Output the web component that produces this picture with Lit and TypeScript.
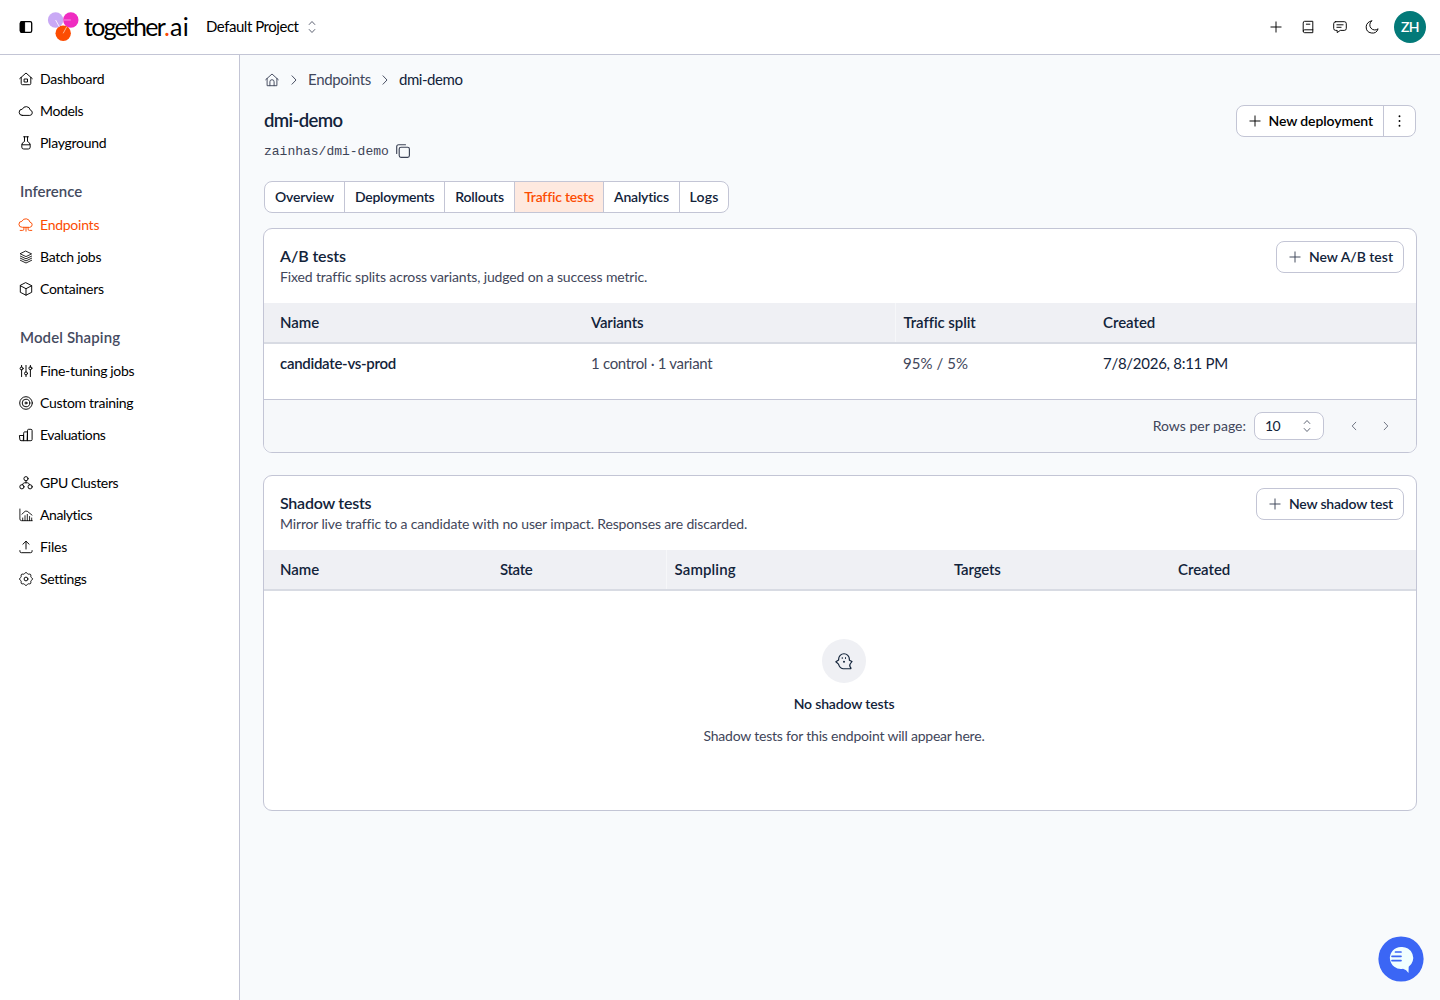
import { LitElement, html, css, svg, nothing, SVGTemplateResult } from "lit";
import { customElement, property } from "lit/decorators.js";

/* Eight-lobed outline of the settings gear. */
const gear =
  "M" +
  Array.from({ length: 64 }, (_, i) => {
    const a = (i / 64) * Math.PI * 2;
    const r = 5.85 + 0.6 * Math.cos(8 * a);
    return `${(8 + r * Math.cos(a)).toFixed(2)} ${(8 + r * Math.sin(a)).toFixed(2)}`;
  }).join("L") +
  "z";

/* Line icons, drawn on a 16 x 16 grid. */
const icons: Record<string, SVGTemplateResult> = {
  panel: svg`<rect x="2.3" y="2.6" width="11.4" height="10.8" rx="1.6" stroke-width="1.3"/><path d="M2.3 4.2Q2.3 2.6 3.9 2.6H6.6V13.4H3.9Q2.3 13.4 2.3 11.8Z" fill="currentColor"/>`,
  dashboard: svg`<path d="M1.7 7.6 8 2l6.3 5.6M3.2 6.4v6q0 1.3 1.3 1.3h7q1.3 0 1.3-1.3v-6M6.5 8h3v3h-3z"/>`,
  models: svg`<path d="M4.2 12.4h7.6a2.7 2.7 0 0 0 .5-5.3 4.2 4.2 0 0 0-8-.9 3.1 3.1 0 0 0-.1 6.2z"/>`,
  playground: svg`<path d="M5.6 1.8h4.8M6.5 1.8v4.7a4 4 0 0 0-2.7 4v1.6q0 1.9 1.9 1.9h4.6q1.9 0 1.9-1.9v-1.6a4 4 0 0 0-2.7-4V1.8M3.8 9.8h8.4"/>`,
  endpoints: svg`<path d="M4 10.300a3 3 0 0 1-.1-6A4.300 4.300 0 0 1 12 5.200a2.600 2.600 0 0 1 .1 5.100zM5.900 10.300v1.900q0 1.200-1.200 1.200H2.200M10.100 10.300v1.900q0 1.200 1.200 1.200h2.500M8 10.300v3.900"/>`,
  batch: svg`<path d="m8 2.2 5.6 2.7L8 7.6 2.4 4.9zM2.4 7.100 8 9.800l5.600-2.700M2.400 9.200 8 11.900l5.600-2.700M2.400 11.300 8 14l5.600-2.700" stroke-width=".85"/>`,
  containers: svg`<path d="m8 1.8 5.7 2.9v6.6L8 14.2l-5.7-2.9V4.7zM2.3 4.7 8 7.7l5.7-3M8 7.7v6.5"/>`,
  tuning: svg`<path d="M3.6 2.4v1.7M3.6 6.6v7M8 2.4v6.5M8 11.9v1.7M12.4 2.4v2M12.4 6.6v7"/><circle cx="3.6" cy="5.5" r="1.5"/><circle cx="8" cy="10.4" r="1.5"/><circle cx="12.4" cy="5.2" r="1.5"/>`,
  training: svg`<circle cx="8" cy="8" r="6.3"/><circle cx="8" cy="8" r="3.8"/><circle cx="8" cy="8" r="1"/>`,
  evaluations: svg`<path d="M1.8 8.5h3.9v5.2H3q-1.2 0-1.2-1.2zM5.7 5.8q0-.9.9-.9h2.9v8.8H5.7zM9.5 3.3q0-1 1-1h2.4q1.2 0 1.2 1.2v9q0 1.2-1.2 1.2H9.500z"/>`,
  gpu: svg`<circle cx="8" cy="3.7" r="2.100"/><circle cx="3.900" cy="11.800" r="2.100"/><circle cx="12.100" cy="11.800" r="2.100"/><path d="M8 5.800v2M4.500 9.800 5 8.800Q5.400 7.800 6.500 7.800h3q1.100 0 1.500 1l.5 1"/>`,
  analytics: svg`<path d="M1.900 2v10q0 1.700 1.700 1.700h10.600M3.900 7.200l3.300-3 2 0 4.800 3.900M4.700 11v2.600M7 8.700v4.900M9.300 7.400v6.200M11.600 9.500v4.100M13.700 11v2.600" stroke-width=".85"/>`,
  files: svg`<path d="M8 10V2.400M4.900 5.200 8 2.200l3.100 3M1.900 11.600v.6q0 1.500 1.500 1.500h9.200q1.500 0 1.500-1.500v-.6"/>`,
  settings: svg`<path d=${gear}/><circle cx="8" cy="8" r="1.900"/>`,
  plus: svg`<path d="M8 2.900v10.200M2.900 8h10.200"/>`,
  book: svg`<path d="M3.200 3.700q0-1.400 1.400-1.400h8.200v11.400H4.600q-1.400 0-1.400-1.400zM3.200 12q0-1.200 1.400-1.200h8.200M6.300 5.200h3.600"/>`,
  chat: svg`<path d="M3.700 2.700h8.600q2 0 2 2v4.700q0 2-2 2H8.300l-3.100 2.200v-2.200H3.700q-2 0-2-2V4.700q0-2 2-2zM4.900 5.800h6.200M4.900 8.300h4.200"/>`,
  moon: svg`<path d="M7.600 1.900a6.100 6.100 0 1 0 6.500 7.900A5 5 0 0 1 7.600 1.900z"/>`,
  sort: svg`<path d="m5.200 5.500 2.800-3 2.800 3M5.200 10.500l2.800 3 2.800-3"/>`,
  home: svg`<path d="M1.700 7.700 8 2l6.300 5.700M3.100 6.500v7.200h9.800V6.500M5.900 13.700V9.800q0-2.100 2.100-2.100t2.100 2.100v3.900"/>`,
  right: svg`<path d="M6 3.800 10 8l-4 4.200"/>`,
  left: svg`<path d="M10 3.800 6 8l4 4.200"/>`,
  dots: svg`<g fill="currentColor" stroke="none"><circle cx="7.500" cy="3.300" r=".95"/><circle cx="7.500" cy="8" r=".95"/><circle cx="7.500" cy="12.700" r=".95"/></g>`,
  copy: svg`<rect x="4.200" y="4.200" width="10.200" height="10.200" rx="1.800" stroke-width="1.150"/><path d="M1.700 10.500V3.700q0-2 2-2h6.800" stroke-width="1.150"/>`,
  ghost: svg`<path d="M3.700 6.500a4.300 4.300 0 0 1 8.600 0v.9l2.100 1-1.500 2q-.9 1.500.7 3.400-.2.500-.9.400H7.200Q4.600 13.900 3.600 10.500L1.500 8.600l2.200-1.400z"/><path d="M6.600 5.300v.7M9.200 5.300v.7" stroke-width=".8"/><circle cx="8" cy="8.600" r=".8" fill="currentColor" stroke="none"/>`,
};

const icon = (name: string, size = 16) =>
  html`<svg width=${size} height=${size} viewBox="0 0 16 16" fill="none" stroke="currentColor" stroke-width=".95" stroke-linejoin="round" stroke-linecap="round">${icons[name]}</svg>`;

/* One line of text whose tracking is adjusted to a given measure. */
@customElement("tracked-text")
class TrackedText extends LitElement {
  static styles = css`
    :host { display: inline-block; white-space: pre; flex: none; }
  `;
  @property() text = "";
  @property({ type: Number }) measure = 0;
  render() {
    return html`${this.text}`;
  }
  firstUpdated() {
    const natural = this.getBoundingClientRect().width;
    this.style.letterSpacing = `${(this.measure - natural) / this.text.length}px`;
  }
}

const t = (text: string, measure: number) =>
  html`<tracked-text .text=${text} .measure=${measure}></tracked-text>`;

type Item = [string, string, number];
const groups: { title?: [string, number]; items: Item[] }[] = [
  { items: [["dashboard", "Dashboard", 64.300], ["models", "Models", 43.300], ["playground", "Playground", 66.300]] },
  { title: ["Inference", 62.200], items: [["endpoints", "Endpoints", 59.200], ["batch", "Batch jobs", 61.200], ["containers", "Containers", 63.700]] },
  { title: ["Model Shaping", 100.200], items: [["tuning", "Fine-tuning jobs", 94.200], ["training", "Custom training", 93.300], ["evaluations", "Evaluations", 65.700]] },
  { items: [["gpu", "GPU Clusters", 78.300], ["analytics", "Analytics", 52.300], ["files", "Files", 27.200], ["settings", "Settings", 46.200]] },
];

const tabs: [string, number, number][] = [
  ["Overview", 59, 79], ["Deployments", 79.500, 100.400], ["Rollouts", 48.700, 69.400],
  ["Traffic tests", 69, 89.400], ["Analytics", 55, 75.500], ["Logs", 29, 49.800],
];

@customElement("app-root")
class AppRoot extends LitElement {
  static styles = css`
    :host {
      display: block;
      font-family: Lato, "Liberation Sans", sans-serif;
      font-size: 14px;
      line-height: 20px;
      color: #12233a;
    }
    * { box-sizing: border-box; }
    svg { display: block; flex: none; }
    .page { position: relative; display: flex; flex-direction: column; height: 1000px; overflow: hidden; background: #f8fafc; }
    .top { display: flex; align-items: center; height: 55px; padding: 0 14px 0 18px; background: #fff; border-bottom: 1px solid #c3c5d5; color: #000; }
    .mark { margin-left: 13px; }
    .brand { margin-left: 5px; font-size: 25px; line-height: 30px; height: 32px; display: flex; }
    .dot { color: #fc4c02; }
    .project { margin-left: 17px; font-size: 15px; padding-bottom: 2px; display: flex; align-items: center; gap: 5px; }
    .project svg { color: #555b6b; margin-top: 2px; }
    .actions { margin-left: auto; display: flex; align-items: center; gap: 16px; }
    .avatar { width: 32px; height: 32px; margin-left: -2px; border-radius: 50%; background: #037a79; color: #fff; font-weight: 600; display: flex; align-items: center; justify-content: center; }
    .body { flex: 1; display: flex; min-height: 0; }
    .side { width: 240px; flex: none; background: #fff; border-right: 1px solid #c3c5d5; padding: 8px 18px; color: #000; display: flex; flex-direction: column; gap: 16px; }
    .item { display: flex; align-items: center; gap: 6px; height: 32px; }
    .active { color: #fc4c02; }
    .group { display: flex; align-items: center; height: 34px; padding: 0 0 2px 2px; font-size: 15px; font-weight: 600; color: #454b5f; }
    .main { flex: 1; min-width: 0; padding: 15px 23px; display: flex; flex-direction: column; }
    .crumbs { display: flex; align-items: center; gap: 6px; height: 20px; padding-left: 1px; font-size: 15px; color: #41485c; }
    .crumbs > span { display: flex; margin-top: -2px; }
    .current { color: #12233a; }
    .head { display: flex; justify-content: space-between; padding: 15px 1px 0; }
    .title { font-size: 18.500px; font-weight: 600; line-height: 31px; height: 32px; }
    .slug { display: flex; align-items: center; gap: 6px; height: 20px; margin-top: 4px; font: 13px/20px "Liberation Mono", monospace; color: #3c4356; }
    .slug span { padding-top: 1px; }
    .button { display: flex; align-items: center; height: 32px; background: #fff; border: 1px solid #c3c5d5; border-radius: 8px; font-weight: 600; }
    .button svg { color: #3c4356; }
    .button .label { display: flex; align-items: center; gap: 6px; padding: 0 10px; height: 100%; }
    .button .more { display: flex; align-items: center; justify-content: center; width: 32px; height: 100%; border-left: 1px solid #c3c5d5; }
    .button.strong, .button.strong svg { color: #000; }
    .tabs { display: flex; align-self: flex-start; height: 32px; margin: 20px 0 0 1px; background: #fff; border: 1px solid #c3c5d5; border-radius: 8px; overflow: hidden; font-weight: 600; }
    .tab { display: flex; align-items: center; justify-content: center; border-left: 1px solid #c3c5d5; }
    .tab:first-child { border-left: 0; }
    .on { background: #fee9df; color: #fc4c02; }
    .card { margin-top: 15px; background: #fff; border: 1px solid #c3c5d5; border-radius: 9px; overflow: hidden; }
    .card + .card { margin-top: 22px; }
    .intro { display: flex; justify-content: space-between; height: 74px; padding: 12px 12px 0 16px; }
    .name { font-size: 16px; font-weight: 600; line-height: 22px; padding-top: 4px; }
    .desc { color: #3f465a; line-height: 20px; }
    .row { display: grid; font-size: 15px; }
    .ab { grid-template-columns: 319px 312px 200px 1fr; }
    .shadow { grid-template-columns: 228px 174px 280px 224px 1fr; }
    .th { height: 41px; background: #eff0f4; border-bottom: 2px solid #d8dbe3; font-weight: 600; }
    .cell { display: flex; align-items: center; padding: 0 8px; }
    .cell:first-child { padding-left: 16px; }
    .th .cell { padding-bottom: 1px; }
    .line { border-left: 1px solid #f6f7f9; padding-left: 7.500px; }
    .td { height: 55px; padding-bottom: 17px; }
    .soft { color: #3f465a; }
    .bold { font-weight: 600; }
    .foot { height: 53px; border-top: 1px solid #c3c5d5; background: #f6f8fa; display: flex; align-items: center; justify-content: flex-end; padding-right: 22px; color: #3f465a; }
    .select { display: flex; align-items: center; justify-content: space-between; width: 70px; height: 28px; margin: 0 22px 0 8px; padding: 0 8px 0 10px; background: #fff; border: 1px solid #c3c5d5; border-radius: 8px; color: #12233a; }
    .select svg, .pager { color: #5a6070; }
    .pager { display: flex; gap: 16px; }
    .pager svg { transform: scale(.9); }
    .empty { height: 219px; display: flex; flex-direction: column; align-items: center; padding: 47.500px 0 0 8px; }
    .ghost { width: 44px; height: 44px; border-radius: 50%; background: #eff0f4; display: flex; align-items: center; justify-content: center; }
    .none { margin-top: 11.500px; font-weight: 600; }
    .note { margin-top: 12px; color: #3f465a; }
    .fab { position: absolute; right: 16px; bottom: 18px; }
  `;

  private logo() {
    return html`<svg class="mark" width="32" height="30" viewBox="0 0 32 30">
      <circle cx="8.600" cy="8" r="7.700" fill="#c9a9f5"/>
      <circle cx="23.800" cy="8" r="7.700" fill="#ef2cc1"/>
      <circle cx="16.200" cy="21.300" r="7.700" fill="#fc4c02"/>
      <path d="m8.600 8 3.700 6.700" stroke="#fff" stroke-width=".8"/>
      <path d="M16.200 8h7.600" stroke="#f9a8e4" stroke-width=".8"/>
      <path d="m16.200 21.300 3.400-6.300" stroke="#ffd0b8" stroke-width=".8"/>
    </svg>`;
  }

  private addButton(label: string, measure: number) {
    return html`<div class="button"><div class="label">${icon("plus")}${t(label, measure)}</div></div>`;
  }

  private headCells(cells: Item[]) {
    return cells.map(([cls, text, w]) => html`<div class="cell ${cls}">${t(text, w)}</div>`);
  }

  render() {
    return html`<div class="page">
      <header class="top">
        ${icon("panel")}${this.logo()}
        <div class="brand">${t("together", 80)}<span class="dot">${t(".", 6)}</span>${t("ai", 19)}</div>
        <div class="project">${t("Default Project", 92.500)}${icon("sort")}</div>
        <div class="actions">
          ${icon("plus")}${icon("book")}${icon("chat")}${icon("moon")}
          <div class="avatar">${t("ZH", 18)}</div>
        </div>
      </header>
      <div class="body">
        <nav class="side">
          ${groups.map((g) => html`<div>
            ${g.title ? html`<div class="group">${t(g.title[0], g.title[1])}</div>` : nothing}
            ${g.items.map(([ic, label, w]) => html`<div class="item ${ic === "endpoints" ? "active" : ""}">${icon(ic)}${t(label, w)}</div>`)}
          </div>`)}
        </nav>
        <main class="main">
          <div class="crumbs">
            ${icon("home")}${icon("right")}<span>${t("Endpoints", 63)}</span>${icon("right")}<span class="current">${t("dmi-demo", 63.500)}</span>
          </div>
          <div class="head">
            <div>
              <div class="title">${t("dmi-demo", 78.500)}</div>
              <div class="slug"><span>zainhas/dmi-demo</span>${icon("copy")}</div>
            </div>
            <div class="button strong"><div class="label">${icon("plus")}${t("New deployment", 104.500)}</div><div class="more">${icon("dots")}</div></div>
          </div>
          <div class="tabs">
            ${tabs.map(([label, w, box]) => html`<div class="tab ${label === "Traffic tests" ? "on" : ""}" style="width:${box}px">${t(label, w)}</div>`)}
          </div>
          <section class="card">
            <div class="intro">
              <div><div class="name">${t("A/B tests", 66)}</div><div class="desc">${t("Fixed traffic splits across variants, judged on a success metric.", 366.500)}</div></div>
              ${this.addButton("New A/B test", 84)}
            </div>
            <div class="row ab th">${this.headCells([["", "Name", 39.300], ["", "Variants", 52.300], ["line", "Traffic split", 71.500], ["", "Created", 52.300]])}</div>
            <div class="row ab td">
              <div class="cell bold">${t("candidate-vs-prod", 116)}</div>
              <div class="cell soft">${t("1 control · 1 variant", 121.300)}</div>
              <div class="cell soft">${t("95% / 5%", 65)}</div>
              <div class="cell">${t("7/8/2026, 8:11 PM", 125)}</div>
            </div>
            <div class="foot">
              ${t("Rows per page:", 93.300)}
              <div class="select">${t("10", 15)}${icon("sort")}</div>
              <div class="pager">${icon("left")}${icon("right")}</div>
            </div>
          </section>
          <section class="card">
            <div class="intro">
              <div><div class="name">${t("Shadow tests", 91.300)}</div><div class="desc">${t("Mirror live traffic to a candidate with no user impact. Responses are discarded.", 466.300)}</div></div>
              ${this.addButton("New shadow test", 104)}
            </div>
            <div class="row shadow th">${this.headCells([["", "Name", 39.300], ["", "State", 32.300], ["line", "Sampling", 61.300], ["", "Targets", 46.700], ["", "Created", 52.300]])}</div>
            <div class="empty">
              <div class="ghost">${icon("ghost", 20)}</div>
              <div class="none">${t("No shadow tests", 100.700)}</div>
              <div class="note">${t("Shadow tests for this endpoint will appear here.", 281)}</div>
            </div>
          </section>
        </main>
      </div>
      <svg class="fab" width="46" height="46" viewBox="0 0 46 46">
        <circle cx="23" cy="23" r="22.600" fill="#3b66f5"/>
        <path d="M23 11a11 11 0 1 0 2 21.800Q28.500 33.500 30.500 37L30.700 30.800A11 11 0 0 0 23 11z" fill="#f0ffff"/>
        <path d="M17.500 16h5.500M14 20.300h9M14 24.600h9" stroke="#3b66f5" stroke-width="1.700" stroke-linecap="round"/>
      </svg>
    </div>`;
  }
}
